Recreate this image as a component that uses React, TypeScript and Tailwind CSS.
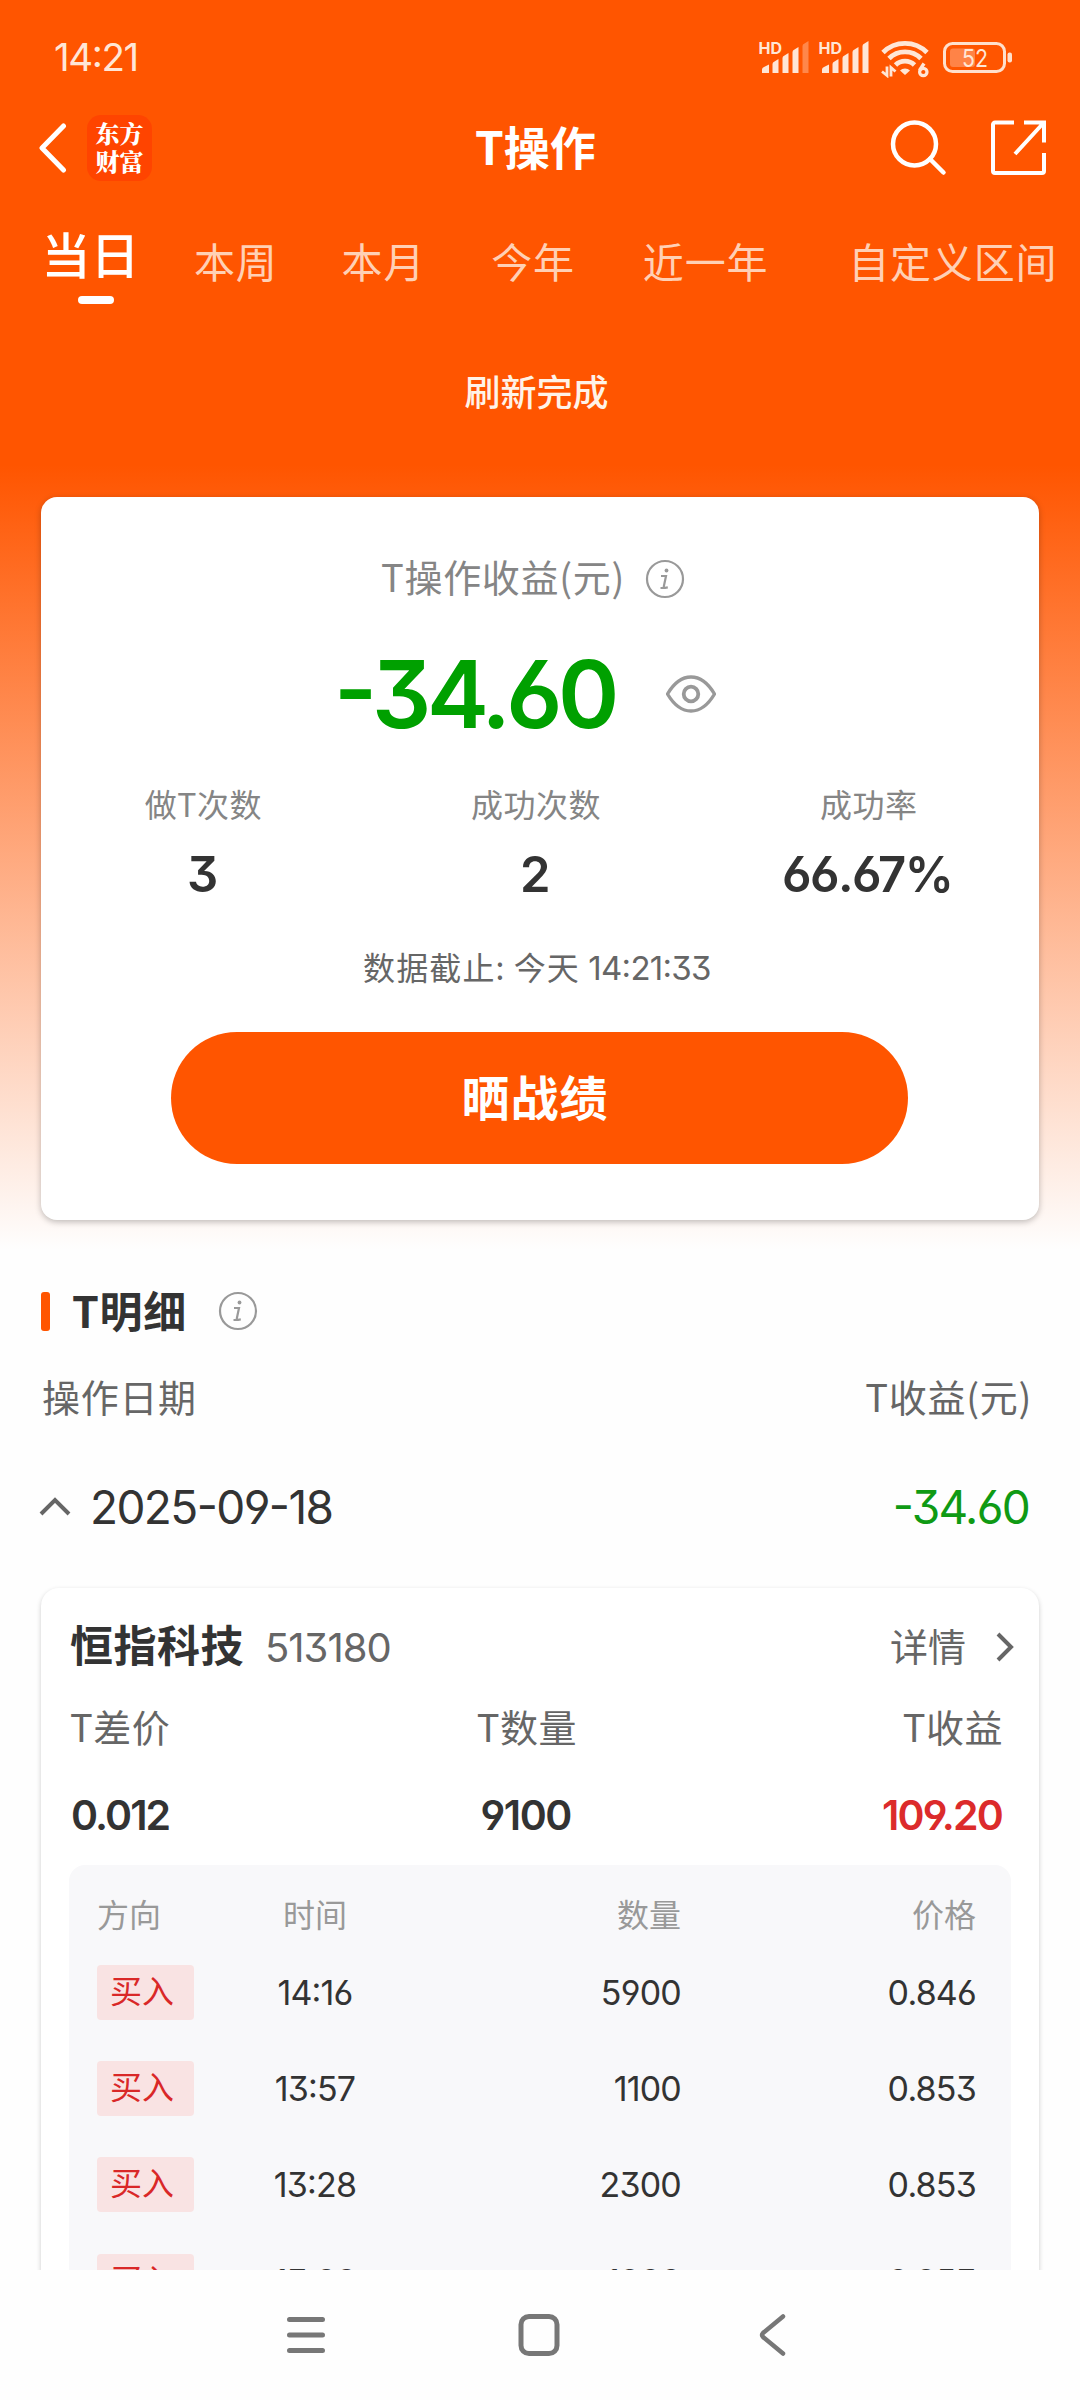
import React from 'react';

const tabs = [
  { label: '本周', className: 'ml-[54px]' },
  { label: '本月', className: 'ml-[64px]' },
  { label: '今年', className: 'ml-[66px]' },
  { label: '近一年', className: 'ml-[68px]' },
  { label: '自定义区间', className: 'ml-[80px]' },
];

const stats = [
  { label: '做T次数', value: '3' },
  { label: '成功次数', value: '2' },
  { label: '成功率', value: '66.67%' },
];

const trades = [
  { side: '买入', time: '14:16', amount: '5900', price: '0.846' },
  { side: '买入', time: '13:57', amount: '1100', price: '0.853' },
  { side: '买入', time: '13:28', amount: '2300', price: '0.853' },
  { side: '买入', time: '13:28', amount: '1000', price: '0.853' },
];

function Num({ className = '', children }: { className?: string; children: React.ReactNode }) {
  return (
    <span
      className={`font-[Inter,'Noto_Sans_CJK_SC',sans-serif] whitespace-nowrap [font-feature-settings:'cv09','cv03','cv04','case'] ${className}`}
    >
      {children}
    </span>
  );
}

function Signal({ full }: { full?: boolean }) {
  return (
    <svg width="52" height="36" viewBox="0 0 52 36" fill="#ffe6d6" className="overflow-visible">
      <text x="-0.500" y="14" fontSize="16" fontWeight="700" fontFamily="Inter, sans-serif">
        HD
      </text>
      <path d="M3 33v-3.500q0-2 2-2.500l5-2.500V33z" />
      <path d="M13.500 33V24q0-2 2-2.500l4-2.500V33z" />
      <path d="M23.500 33V18q0-2 2-2.500l4-2.500V33z" />
      <path d="M33.500 33V12q0-2 2-2.500l4-2.500V33z" />
      <path d="M43.500 33V6q0-2 2-2.500l4-2.500V33z" opacity={full ? 1 : 0.35} />
    </svg>
  );
}

function Wifi() {
  return (
    <svg width="48" height="38" viewBox="0 0 48 38" fill="none" stroke="#ffe6d6" strokeWidth="4.800">
      <path d="M2 12.500a31 31 0 0 1 44 0" />
      <path d="M8 18.500a22.500 22.500 0 0 1 32 0" />
      <path d="M14.500 25a13.500 13.500 0 0 1 19 0" />
      <path d="M24 35l-5-4.500a7 7 0 0 1 10 0z" fill="#ffe6d6" stroke="none" />
      <path d="M1 31.500l5 4V26.500M10 36.500v-9l4.500 4" strokeWidth="2.800" />
      <path d="M43 23.500l-4.500 7" strokeWidth="3.400" />
      <circle cx="42.300" cy="32" r="3.700" strokeWidth="3.200" />
    </svg>
  );
}

function Battery() {
  return (
    <svg width="70" height="32" viewBox="0 0 70 32">
      <rect x="1.500" y="1.500" width="60" height="28" rx="8" fill="none" stroke="#ffe0cc" strokeWidth="3" />
      <rect x="7" y="6.500" width="25" height="18.500" rx="3" fill="#ff8347" />
      <rect x="64.500" y="10.500" width="4.500" height="10" rx="2" fill="#ffe0cc" />
      <text
        x="19"
        y="24.500"
        fontSize="24"
        fontFamily="Inter, sans-serif"
        fill="#ffe6d6"
        textLength="26"
        lengthAdjust="spacingAndGlyphs"
      >
        52
      </text>
    </svg>
  );
}

function InfoIcon() {
  return (
    <svg width="40" height="40" viewBox="0 0 40 40" fill="none" stroke="#999" className="shrink-0">
      <circle cx="20" cy="20" r="18" strokeWidth="2.200" />
      <circle cx="21.500" cy="11.500" r="1.900" fill="#999" stroke="none" />
      <path d="M16 17h5l-2.200 10.500q-.3 1.500 1.200 1.300l2.800-.5M15.500 29h4" strokeWidth="2.200" />
    </svg>
  );
}

function EyeIcon() {
  return (
    <svg width="50" height="38" viewBox="0 0 50 38" fill="none" stroke="#999" strokeWidth="3.400">
      <path d="M1.500 19C8 8 16 2 25 2s17 6 23.500 17C42 30 34 36 25 36S8 30 1.500 19z" strokeLinejoin="round" />
      <circle cx="25" cy="19" r="7.300" strokeWidth="3.800" />
    </svg>
  );
}

function StatusBar() {
  return (
    <div className="flex h-[115px] items-center pl-[54px] pr-[67px] text-[#ffe6d6]">
      <Num className="text-[38.500px] tracking-[-1.400px]">14:21</Num>
      <div className="ml-auto flex items-center">
        <Signal />
        <div className="ml-[8px]">
          <Signal full />
        </div>
        <div className="ml-[10px] mt-[2px]">
          <Wifi />
        </div>
        <div className="ml-[14px]">
          <Battery />
        </div>
      </div>
    </div>
  );
}

function Header() {
  return (
    <div className="flex h-[66px] items-center pl-[38px] pr-[33px]">
      <svg width="30" height="50" viewBox="0 0 30 50" fill="none" stroke="#fff" strokeWidth="5" strokeLinecap="round">
        <path d="M25.500 3L4 25l21.500 22" strokeLinejoin="round" />
      </svg>
      <div className="ml-[19px] flex h-[66px] w-[65px] flex-col items-center justify-center rounded-[14px] bg-[#ff4400] pb-[2px] font-['Noto_Serif_CJK_SC','Noto_Sans_CJK_SC',serif] text-[24px] leading-[28px] font-black text-white">
        <span>东方</span>
        <span>财富</span>
      </div>
      <h1 className="ml-[323px] pb-[5px] text-[46px] font-bold text-white">T操作</h1>
      <div className="ml-auto flex items-center gap-[42px]">
        <svg width="58" height="58" viewBox="0 0 58 58" fill="none" stroke="#fff" strokeWidth="4.500">
          <circle cx="25.500" cy="25" r="21.500" />
          <path d="M41 40L54.500 53.500" strokeLinecap="round" />
        </svg>
        <svg width="58" height="58" viewBox="0 0 58 58" fill="none" stroke="#fff" strokeWidth="4">
          <path d="M25 3.500H6a2 2 0 0 0-2 2v46.500a2 2 0 0 0 2 2h47a2 2 0 0 0 2-2V34" />
          <path d="M35 3.500h20v20M54 4.500L26 35" />
        </svg>
      </div>
    </div>
  );
}

function PeriodTabs() {
  return (
    <div className="flex h-[125px] pl-[41px] pt-[30px]">
      <div className="flex w-[99px] shrink-0 flex-col items-center">
        <span className="h-[80px] text-[49px] leading-[84px] font-medium text-white">当日</span>
        <span className="mt-[5px] ml-[11px] h-[8px] w-[36px] shrink-0 rounded-full bg-white" />
      </div>
      {tabs.map((tab) => (
        <span
          key={tab.label}
          className={`text-[41px] leading-[98px] tracking-[0.800px] whitespace-nowrap text-[#ffd0b5] ${tab.className}`}
        >
          {tab.label}
        </span>
      ))}
    </div>
  );
}

function ProfitCard() {
  return (
    <section className="mx-[41px] flex h-[723px] flex-col rounded-[16px] bg-white pr-[6px] shadow-[0_2px_6px_rgba(0,0,0,0.25)]">
      <div className="mt-[54px] ml-[340px] flex h-[56px] items-center">
        <span className="pb-[7px] text-[38px] tracking-[0.700px] text-[#858585]">T操作收益(元)</span>
        <span className="ml-[20px]">
          <InfoIcon />
        </span>
      </div>

      <div className="mt-[36px] ml-[293px] flex h-[102px] items-center">
        <Num className="w-[332px] pt-[2px] text-[93px] font-semibold tracking-[-4.500px] text-[#00a000]">-34.60</Num>
        <EyeIcon />
      </div>

      <div className="mt-[34px] mr-[-2px] ml-[-4px] grid grid-cols-3 text-center">
        {stats.map((stat) => (
          <div key={stat.label} className="flex flex-col">
            <span className="h-[48px] text-[32px] leading-[48px] tracking-[0.500px] text-[#858585]">
              {stat.label}
            </span>
            <Num className="mt-[18px] h-[60px] pr-[3px] text-[49px] leading-[60px] font-semibold tracking-[-1.600px] text-[#333]">
              {stat.value}
            </Num>
          </div>
        ))}
      </div>

      <div className="mt-[36px] h-[50px] text-center text-[32px] leading-[50px] tracking-[1.100px] text-[#666]">
        数据截止: 今天 <Num className="text-[33px] tracking-[-0.700px]">14:21:33</Num>
      </div>

      <button className="mt-[41px] ml-[130px] h-[132px] w-[737px] rounded-full bg-[#ff5500] pr-[9px] pb-[7px] text-[48px] font-bold tracking-[1px] text-white">
        晒战绩
      </button>
    </section>
  );
}

function TradeTable() {
  return (
    <div className="mx-[28px] mt-[22px] h-[480px] rounded-t-[16px] bg-[#f8f8fa] px-[28px] pt-[24px]">
      <div className="grid grid-cols-[97px_242px_1fr_295px] pr-[7px] text-[32px] leading-[48px] text-[#999]">
        <span>方向</span>
        <span className="text-center">时间</span>
        <span className="text-right">数量</span>
        <span className="text-right">价格</span>
      </div>
      <div className="mt-[7px]">
        {trades.map((trade, i) => (
          <div
            key={i}
            className="grid h-[96.300px] grid-cols-[97px_242px_1fr_295px] items-center pr-[7px] text-[34px] text-[#333]"
          >
            <span className="h-[55px] rounded-[4px] bg-[#f9e3e3] pl-[13px] text-[32px] leading-[49px] text-[#d92828]">
              {trade.side}
            </span>
            <Num className="text-center tracking-[-0.800px]">{trade.time}</Num>
            <Num className="text-right tracking-[-0.800px]">{trade.amount}</Num>
            <Num className="text-right tracking-[-0.800px]">{trade.price}</Num>
          </div>
        ))}
      </div>
    </div>
  );
}

function StockCard() {
  return (
    <section className="mx-[41px] mt-[12px] rounded-t-[18px] bg-white shadow-[0_2px_5px_rgba(0,0,0,0.2)]">
      <div className="flex h-[117px] items-center pr-[25px] pl-[29px]">
        <span className="pb-[6px] text-[43px] font-bold tracking-[0.500px] text-[#333]">恒指科技</span>
        <Num className="ml-[21px] pt-[2px] text-[40px] tracking-[-1px] text-[#666]">513180</Num>
        <span className="ml-auto pb-[4px] text-[38px] text-[#666]">详情</span>
        <svg width="20" height="32" viewBox="0 0 20 32" fill="none" stroke="#666" strokeWidth="4" className="ml-[28px]">
          <path d="M4 3l13 13L4 29" />
        </svg>
      </div>

      <div className="mt-[-5px] flex h-[50px] items-center justify-between pr-[36px] pl-[29px] text-[38px] tracking-[0.500px] text-[#666]">
        <span>T差价</span>
        <span className="mr-[19px]">T数量</span>
        <span>T收益</span>
      </div>

      <div className="mt-[38px] flex h-[55px] items-center justify-between pr-[37px] pl-[30px] text-[41px] font-semibold text-[#333]">
        <Num className="tracking-[-1.900px]">0.012</Num>
        <Num className="tracking-[-1.500px]">9100</Num>
        <Num className="tracking-[-1.800px] text-[#dc2b2b]">109.20</Num>
      </div>

      <TradeTable />
    </section>
  );
}

function Details() {
  return (
    <div className="h-[1050px] overflow-hidden">
      <div className="mt-[61px] flex h-[60px] items-center pl-[41px]">
        <span className="h-[39px] w-[9px] rounded-[3px] bg-[#ff5500]" />
        <h2 className="ml-[22px] pb-[4px] text-[43px] font-bold tracking-[0.700px] text-[#333]">T明细</h2>
        <span className="ml-[31px]">
          <InfoIcon />
        </span>
      </div>

      <div className="mt-[24px] flex h-[60px] items-center justify-between pr-[48px] pl-[42px] text-[38px] tracking-[0.700px] text-[#666]">
        <span>操作日期</span>
        <span>T收益(元)</span>
      </div>

      <div className="mt-[31px] flex h-[120px] items-center pr-[51px] pl-[39px] pb-[18px] text-[46px]">
        <svg width="32" height="22" viewBox="0 0 32 22" fill="none" stroke="#666" strokeWidth="4">
          <path d="M2 18L16 4l14 14" />
        </svg>
        <Num className="ml-[19px] tracking-[-1.600px] text-[#333]">2025-09-18</Num>
        <Num className="ml-auto tracking-[-1.700px] text-[#0f9a14]">-34.60</Num>
      </div>

      <StockCard />
    </div>
  );
}

function SystemNav() {
  return (
    <nav className="flex h-[130px] items-start bg-[#fefefe] pt-[42px] pl-[286px]">
      <svg width="40" height="46" viewBox="0 0 40 46" stroke="#777" strokeWidth="5" strokeLinecap="round">
        <path d="M3.500 7.500h33M3.500 23h33M3.500 38.500h33" />
      </svg>
      <svg width="42" height="46" viewBox="0 0 42 46" fill="none" stroke="#777" strokeWidth="5" className="ml-[192px]">
        <rect x="3" y="4.500" width="36" height="37" rx="8" />
      </svg>
      <svg
        width="30"
        height="46"
        viewBox="0 0 30 46"
        fill="none"
        stroke="#777"
        strokeWidth="4.500"
        strokeLinecap="round"
        className="ml-[198px]"
      >
        <path d="M25 4.500L5 21q-2 2 0 4L25 41.500" />
      </svg>
    </nav>
  );
}

export default function App() {
  return (
    <div className="h-[2400px] w-[1080px] overflow-hidden bg-[#fefefe] bg-[linear-gradient(to_bottom,#ff5500_465px,#fefefe_1250px)] font-['Noto_Sans_CJK_SC',sans-serif]">
      <StatusBar />
      <Header />
      <PeriodTabs />
      <div className="h-[191px] pt-[59px] pr-[7px] text-center text-[36px] leading-[50px] font-medium text-[#fff3e8]">
        刷新完成
      </div>
      <ProfitCard />
      <Details />
      <SystemNav />
    </div>
  );
}
